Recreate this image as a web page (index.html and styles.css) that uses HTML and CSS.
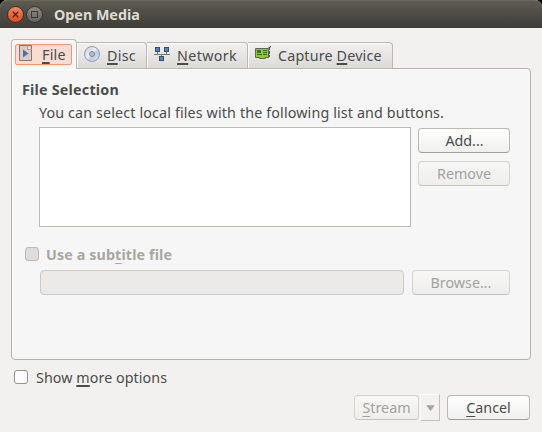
FILE: index.html
```html
<!DOCTYPE html>
<html lang="en">
<head>
<meta charset="utf-8">
<title>Open Media</title>
<link rel="stylesheet" href="styles.css">
</head>
<body>
<div class="window">
  <header class="titlebar">
    <span class="wm close"><svg width="15" height="15" viewBox="0 0 15 15"><path d="M4.800 4.800l5.400 5.400M10.200 4.800l-5.400 5.400" stroke="#54251a" stroke-width="1.4"/></svg></span>
    <span class="wm max"><svg width="15" height="15" viewBox="0 0 15 15"><rect x="4.500" y="4.500" width="6" height="6" fill="none" stroke="#3b3a36"/></svg></span>
    <h1>Open Media</h1>
  </header>
  <nav class="tabs">
    <div class="tab active"><div class="focus">
      <svg class="i-file" width="14" height="17" viewBox="0 0 14 17"><path d="M.5 .5h12v15H.5z" fill="#dfc9c4" stroke="#8c7673"/><path d="M8.500 .5v4h4" fill="#f5e9e5" stroke="#a58d88" stroke-width=".8"/><path d="M4 4.500v8l5.500-4z" fill="#4b70ac"/></svg>
      <span class="t-file"><u>F</u>ile</span></div>
    </div>
    <div class="tab disc">
      <svg width="16" height="16" viewBox="0 0 16 16"><defs><linearGradient id="cd" x1="0" y1="0" x2="1" y2="1"><stop offset="0" stop-color="#bcc9e0"/><stop offset=".45" stop-color="#e8eef8"/><stop offset=".6" stop-color="#bdcde8"/><stop offset="1" stop-color="#dde3ef"/></linearGradient></defs><circle cx="8" cy="8" r="7.500" fill="url(#cd)" stroke="#969ba6"/><circle cx="8" cy="8" r="2.500" fill="#c4c6ca" stroke="#85888f"/><circle cx="8" cy="8" r="1" fill="#fff" stroke="#777" stroke-width=".5"/></svg>
      <span class="t-disc"><u>D</u>isc</span>
    </div>
    <div class="tab net">
      <svg width="16" height="15" viewBox="0 0 16 15"><path d="M0 7.500h16M3.500 5v2M12.500 5v2M7.500 7v3" stroke="#777773" fill="none"/><g fill="#4387d4" stroke="#4a4c50"><rect x="1.500" y=".5" width="4" height="4"/><rect x="10.500" y=".5" width="4" height="4"/><rect x="5.500" y="9.500" width="4" height="4"/></g></svg>
      <span class="t-net"><u>N</u>etwork</span>
    </div>
    <div class="tab cap">
      <svg width="17" height="14" viewBox="0 0 17 14"><path d="M.5 2.500h13v9h-3v1h-6v-1h-4z" fill="#8cc63a" stroke="#626659"/><path d="M13.500 1.500h2M14.500 1v3M14.500 5v3M14.500 9v2" stroke="#56584f"/><path d="M15 .5h1" stroke="#777"/><path d="M2 4h4v3H2zM2 8h5v1H2zM8 4h4v1H8zM8 6h4v1H8zM8 8h4v1H8z" fill="#41730b"/></svg>
      <span class="t-cap">Capture <u>D</u>evice</span>
    </div>
  </nav>
  <main class="panel">
    <h2>File Selection</h2>
    <p>You can select local files with the following list and buttons.</p>
    <div class="row files">
      <div class="list"></div>
      <div class="stack"><button class="btn"><span class="t-add">Add...</span></button><button class="btn" disabled><span>Remove</span></button></div>
    </div>
    <label class="check sub"><i class="box off"></i><span>Use a sub<u>t</u>itle file</span></label>
    <div class="row browse">
      <div class="entry"></div>
      <button class="btn" disabled><span>Browse...</span></button>
    </div>
  </main>
  <label class="check more"><i class="box"></i><span>Show <u>m</u>ore options</span></label>
  <footer class="actions">
    <button class="btn stream" disabled><span><u>S</u>tream</span></button>
    <span class="drop"><svg width="9" height="6" viewBox="0 0 9 6"><path d="M1 .7h7L4.500 5.500z" fill="#a5a4a1" stroke="#aaa9a6"/></svg></span>
    <button class="btn cancel"><span><u>C</u>ancel</span></button>
  </footer>
</div>
</body>
</html>
```
FILE: styles.css
```css
* { box-sizing: border-box; }
body {
  margin: 0;
  background: #000;
  color: #4c4c4c;
  font: 14.3px/20px "Noto Sans", "Open Sans", sans-serif;
}
.window {
  width: 542px;
  height: 432px;
  background: #f2f1f0;
  border-radius: 7px 7px 0 0;
  overflow: hidden;
}
svg { display: block; flex: none; }
span { white-space: nowrap; }
u { text-decoration: underline 2px; text-underline-offset: 2px; text-decoration-skip-ink: none; }
.titlebar {
  height: 28px;
  display: flex;
  align-items: center;
  padding-left: 7px;
  background: linear-gradient(#5d5b51, #3d3c38);
  border-top: 1px solid #69665c;
}
.wm { width: 17px; height: 17px; border-radius: 50%; border: 1px solid #33322e; margin-right: 2px; }
.close { background: linear-gradient(#f48462, #df4b1a); }
.max { background: linear-gradient(#8b8980, #66645d); }
h1 { margin: 1px 0 0 9px; font-size: 14.3px; line-height: 20px; color: #dfdbd2; }
.tabs { display: flex; align-items: flex-end; height: 41px; padding-left: 11px; }
.tab {
  height: 27px;
  display: flex;
  border: 1px solid #bcb8b1;
  border-left: 0;
  border-radius: 0 4px 0 0;
  background: linear-gradient(#f2f1f0, #dcdad7);
  box-shadow: inset 1px 1px #faf9f8;
}
.tab > span { margin-top: 3px; }
.active {
  height: 30px;
  width: 66px;
  border: 1px solid #bcb8b1;
  border-bottom: 0;
  border-radius: 4px 4px 0 0;
  background: #f6f6f6;
  position: relative;
  z-index: 1;
  padding: 4px 3px;
}
.focus { display: flex; width: 57px; height: 21px; border: 1px solid #f09a74; border-radius: 2px; background: #f9ddd2; }
.i-file { margin: 0 0 0 3px; }
.focus span { margin: 0 0 0 9px; }
.t-file, .t-disc { letter-spacing: .25px; }
.disc { width: 70px; padding-left: 7px; }
.disc svg { margin-top: 3px; }
.disc span { margin-left: 7px; }
.net { width: 101px; padding-left: 7px; }
.net svg { margin-top: 4px; }
.net span { margin-left: 7px; letter-spacing: .35px; }
.cap { width: 145px; padding-left: 7px; }
.cap svg { margin-top: 3px; }
.cap span { margin-left: 6px; letter-spacing: .17px; }
.panel {
  width: 520px;
  height: 292px;
  margin: -1px 0 0 11px;
  padding: 11px 20px 0 10px;
  border: 1px solid #b5b2ac;
  border-radius: 0 4px 4px 4px;
  background: #f6f6f6;
  box-shadow: inset 1px 1px #fff;
}
h2 { margin: 0; font-size: 14.3px; line-height: 20px; letter-spacing: .22px; }
p { margin: 3px 0 0 17px; white-space: nowrap; letter-spacing: .135px; }
.row { display: flex; gap: 7px; margin-left: 17px; }
.files { margin-top: 4px; }
.list { width: 372px; height: 100px; background: #fff; border: 1px solid #bebbb5; }
.stack { display: flex; flex-direction: column; gap: 8px; padding-top: 1px; }
.btn {
  width: 92px;
  height: 25px;
  padding: 0;
  font: inherit;
  color: #4c4c4c;
  border: 1px solid #bdbab5;
  border-bottom-color: #a09d98;
  border-radius: 4px;
  background: linear-gradient(#fff, #f1f0ef);
  display: flex;
  justify-content: center;
  align-items: center;
}
.btn:disabled { color: #a3a29f; border-color: #d5d3cf; border-bottom-color: #c4c2be; background: linear-gradient(#f7f7f6, #efeeed); }
.t-add { padding-left: 1px; }
.check { display: flex; align-items: center; height: 20px; }
.box { width: 14px; height: 14px; border: 1px solid #96938f; border-radius: 3px; background: #fff; }
.box.off { border-color: #bbb8b4; background: #dedddb; }
.sub { margin: 17px 0 0 3px; gap: 7px; color: #aaa7a2; font-weight: bold; }
.sub span { letter-spacing: .12px; padding-top: 1px; }
.sub u { text-decoration-thickness: 1px; text-underline-offset: 3px; }
.browse { margin: 6px 0 0 18px; gap: 8px; }
.entry { width: 364px; height: 25px; border: 1px solid #cdcac6; border-radius: 4px; background: #ebeae8; }
.browse .btn { width: 98px; }
.more { margin: 7px 0 0 14px; gap: 8px; }
.more span { letter-spacing: .06px; padding-top: 1px; }
.actions { display: flex; margin: 7px 0 0 354px; }
.stream { width: 65px; margin-top: 1px; }
.stream u, .cancel u { text-decoration-thickness: 1px; text-underline-offset: 3px; }
.drop { width: 20px; height: 27px; margin-left: 1px; display: flex; justify-content: center; align-items: center; padding-top: 1px; border: 1px solid #fbfbfa; border-right-color: #c2c0bd; border-bottom-color: #c2c0bd; }
.cancel { width: 83px; margin: 1px 0 0 7px; }
```
